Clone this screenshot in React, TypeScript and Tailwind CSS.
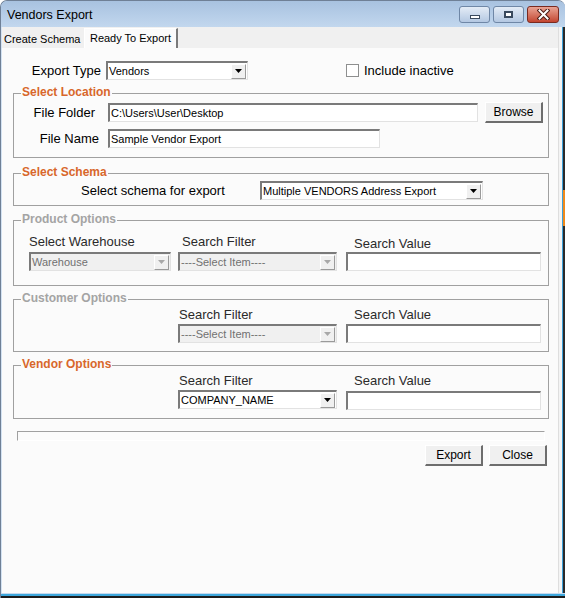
import type { ReactNode } from "react";

function Arrow({ disabled }: { disabled?: boolean }) {
  return (
    <div className="mr-[1px] flex h-[15px] w-[15px] shrink-0 items-center justify-center border-t border-l border-r border-b border-t-white border-l-white border-r-[#9a9a9a] border-b-[#9a9a9a] bg-[#f0f0f0]">
      <svg width="7" height="4" viewBox="0 0 7 4">
        <path d="M0 0 H7 L3.5 4 Z" fill={disabled ? "#a8a8a8" : "#000"} />
      </svg>
    </div>
  );
}

function Combo({ value, w, disabled }: { value: string; w: string; disabled?: boolean }) {
  return (
    <div
      className={`flex h-[19px] ${w} items-center border-t-2 border-l-2 border-r border-b border-t-[#7a7a7a] border-l-[#7a7a7a] border-r-[#e2e2e2] border-b-[#e2e2e2] ${
        disabled ? "bg-[#f0f0f0] text-[#707070]" : "bg-white text-black"
      }`}
    >
      <span className="flex-1 truncate pl-[1px] text-[11px] leading-[15px]">{value}</span>
      <Arrow disabled={disabled} />
    </div>
  );
}

function TextBox({ value, w }: { value?: string; w: string }) {
  return (
    <div className={`flex h-[19px] ${w} items-center border-t-2 border-l-2 border-r border-b border-t-[#7a7a7a] border-l-[#7a7a7a] border-r-[#e2e2e2] border-b-[#e2e2e2] bg-white`}>
      <span className="pl-[1px] text-[11px] leading-[15px] text-black">{value}</span>
    </div>
  );
}

function Btn({ label }: { label: string }) {
  return (
    <div className="flex h-[21px] w-[58px] items-center justify-center border-t border-l border-r-2 border-b-2 border-t-white border-l-white border-r-[#6d6d6d] border-b-[#6d6d6d] bg-[#f0f0f0] text-[12px] text-black">
      {label}
    </div>
  );
}

function Group({ title, tone, h, mt, children }: { title: string; tone: "on" | "off"; h: string; mt: string; children: ReactNode }) {
  return (
    <div className={`relative ml-[11px] ${mt} ${h} w-[536px] border border-[#a0a0a0]`}>
      <span
        className={`absolute -top-[9px] left-[7px] bg-[#fbfbfb] px-[1px] text-[12px] font-bold leading-[15px] ${
          tone === "on" ? "text-[#d8672b]" : "text-[#a4a4a4]"
        }`}
      >
        {title}
      </span>
      {children}
    </div>
  );
}

function Col({ ml, w, label, lpad, children, lmt }: { ml: string; w: string; label?: string; lpad?: string; lmt?: string; children?: ReactNode }) {
  return (
    <div className={`flex ${ml} ${w} flex-col`}>
      <span className={`h-[15px] ${lpad ?? ""} ${lmt ?? ""} text-[13px] leading-[15px] text-[#2a2a2a]`}>{label}</span>
      {children}
    </div>
  );
}

export default function App() {
  return (
    <div className="flex h-[598px] w-[565px] flex-col overflow-hidden rounded-t-[7px] border-t border-l border-[#6f8096] bg-[#b9d1ea] font-['Liberation_Sans',Arial,sans-serif]">
      {/* title bar */}
      <div className="flex h-[26px] shrink-0 items-center justify-between bg-gradient-to-b from-[#a8c2e0] to-[#c2d7ee] pl-[6px] pr-[6px]">
        <span className="pt-[3px] text-[12.5px] text-black">Vendors Export</span>
        <div className="flex gap-[3px] pt-[1px]">
          <div className="flex h-[17px] w-[31px] items-end justify-center rounded-[3px] border border-[#6f87a6] bg-gradient-to-b from-[#e4ecf6] to-[#b4c8e2] pb-[3px]">
            <div className="h-[4px] w-[10px] border border-[#3a4a5e] bg-white" />
          </div>
          <div className="flex h-[17px] w-[31px] items-center justify-center rounded-[3px] border border-[#6f87a6] bg-gradient-to-b from-[#e4ecf6] to-[#b4c8e2]">
            <div className="h-[7px] w-[9px] border-2 border-[#3a4a5e] bg-white" />
          </div>
          <div className="flex h-[17px] w-[32px] items-center justify-center rounded-[3px] border border-[#7a2a20] bg-gradient-to-b from-[#e8a393] to-[#c24430]">
            <svg width="13" height="11" viewBox="0 0 13 11">
              <path d="M2.5 1.5 L10.5 9.5 M10.5 1.5 L2.5 9.5" stroke="#4a1a14" strokeWidth="4" strokeLinecap="square" />
              <path d="M2.5 1.5 L10.5 9.5 M10.5 1.5 L2.5 9.5" stroke="#fff" strokeWidth="2" strokeLinecap="square" />
            </svg>
          </div>
        </div>
      </div>

      <div className="flex flex-1">
        <div className="w-[1px] bg-[#d3e2f2]" />
        <div className="flex w-[556px] flex-col">
          {/* tabs */}
          <div className="flex h-[21px] shrink-0 items-end bg-[#f0f0f0]">
            <div className="flex h-[18px] w-[82px] items-center pl-[2px] pt-[1px] text-[11px] text-black">Create Schema</div>
            <div className="flex h-[20px] w-[94px] items-center justify-center border-t border-l border-r-2 border-t-white border-l-white border-r-[#7a7a7a] bg-[#fbfbfb] pb-[1px] text-[11px] text-black">
              Ready To Export
            </div>
          </div>

          {/* page */}
          <div className="flex flex-1 flex-col bg-[#fbfbfb]">
            <div className="mt-[13px] flex h-[19px] items-center">
              <span className="w-[99px] text-right text-[13px] text-black">Export Type</span>
              <div className="ml-[5px]">
                <Combo value="Vendors" w="w-[142px]" />
              </div>
              <div className="ml-[98px] h-[13px] w-[13px] border border-[#8e8f8f] bg-white" />
              <span className="ml-[5px] text-[13px] text-black">Include inactive</span>
            </div>

            <Group title="Select Location" tone="on" h="h-[65px]" mt="mt-[13px]">
              <div className="pt-[9px]">
                <div className="flex h-[19px] items-center">
                  <span className="w-[81px] text-right text-[13px] text-black">File Folder</span>
                  <div className="ml-[13px]">
                    <TextBox value="C:\Users\User\Desktop" w="w-[370px]" />
                  </div>
                  <div className="ml-[7px]">
                    <Btn label="Browse" />
                  </div>
                </div>
                <div className="mt-[7px] flex h-[19px] items-center">
                  <span className="w-[85px] text-right text-[13px] text-black">File Name</span>
                  <div className="ml-[9px]">
                    <TextBox value="Sample Vendor Export" w="w-[272px]" />
                  </div>
                </div>
              </div>
            </Group>

            <Group title="Select Schema" tone="on" h="h-[33px]" mt="mt-[15px]">
              <div className="mt-[7px] flex h-[19px] items-center">
                <span className="ml-[67px] w-[179px] text-[13px] text-black">Select schema for export</span>
                <Combo value="Multiple VENDORS Address Export" w="w-[223px]" />
              </div>
            </Group>

            <Group title="Product Options" tone="off" h="h-[66px]" mt="mt-[14px]">
              <div className="flex pt-[13px]">
                <Col ml="ml-[15px]" w="w-[142px]" label="Select Warehouse">
                  <div className="mt-[3px]">
                    <Combo value="Warehouse" w="w-[142px]" disabled />
                  </div>
                </Col>
                <Col ml="ml-[7px]" w="w-[159px]" label="Search Filter" lpad="pl-[4px]">
                  <div className="mt-[3px]">
                    <Combo value="----Select Item----" w="w-[159px]" disabled />
                  </div>
                </Col>
                <Col ml="ml-[9px]" w="w-[195px]" label="Search Value" lpad="pl-[8px]" lmt="mt-[2px]">
                  <div className="mt-[1px]">
                    <TextBox w="w-[195px]" />
                  </div>
                </Col>
              </div>
            </Group>

            <Group title="Customer Options" tone="off" h="h-[53px]" mt="mt-[13px]">
              <div className="flex pt-[7px]">
                <Col ml="ml-[15px]" w="w-[142px]" />
                <Col ml="ml-[7px]" w="w-[159px]" label="Search Filter" lpad="pl-[1px]">
                  <div className="mt-[2px]">
                    <Combo value="----Select Item----" w="w-[159px]" disabled />
                  </div>
                </Col>
                <Col ml="ml-[9px]" w="w-[195px]" label="Search Value" lpad="pl-[8px]">
                  <div className="mt-[2px]">
                    <TextBox w="w-[195px]" />
                  </div>
                </Col>
              </div>
            </Group>

            <Group title="Vendor Options" tone="on" h="h-[54px]" mt="mt-[13px]">
              <div className="flex pt-[7px]">
                <Col ml="ml-[15px]" w="w-[142px]" />
                <Col ml="ml-[7px]" w="w-[159px]" label="Search Filter" lpad="pl-[1px]">
                  <div className="mt-[2px]">
                    <Combo value="COMPANY_NAME" w="w-[159px]" />
                  </div>
                </Col>
                <Col ml="ml-[9px]" w="w-[195px]" label="Search Value" lpad="pl-[8px]">
                  <div className="mt-[3px]">
                    <TextBox w="w-[195px]" />
                  </div>
                </Col>
              </div>
            </Group>

            <div className="ml-[15px] mt-[12px] h-[10px] w-[528px] border-t border-l border-r border-b border-t-[#a0a0a0] border-l-[#a0a0a0] border-r-white border-b-white bg-[#fbfbfb]" />

            <div className="mt-[4px] flex justify-end gap-[6px] pr-[11px]">
              <Btn label="Export" />
              <Btn label="Close" />
            </div>
          </div>
        </div>
        <div className="w-[4px] border-l border-[#dedede] bg-[#f4f4f4]" />
        <div className="w-[1px] bg-[#3c9fd8]" />
        <div className="flex w-[2px] flex-col">
          <div className="h-[163px] bg-[#2a2a2a]" />
          <div className="h-[36px] bg-[#f08a1c]" />
          <div className="flex-1 bg-[#2a2a2a]" />
        </div>
      </div>
      <div className="h-[1px] shrink-0 bg-[#c6d9ee]" />
      <div className="h-[2px] shrink-0 bg-[#3ea7dc]" />
      <div className="h-[2px] shrink-0 bg-[#1c1c1c]" />
    </div>
  );
}
